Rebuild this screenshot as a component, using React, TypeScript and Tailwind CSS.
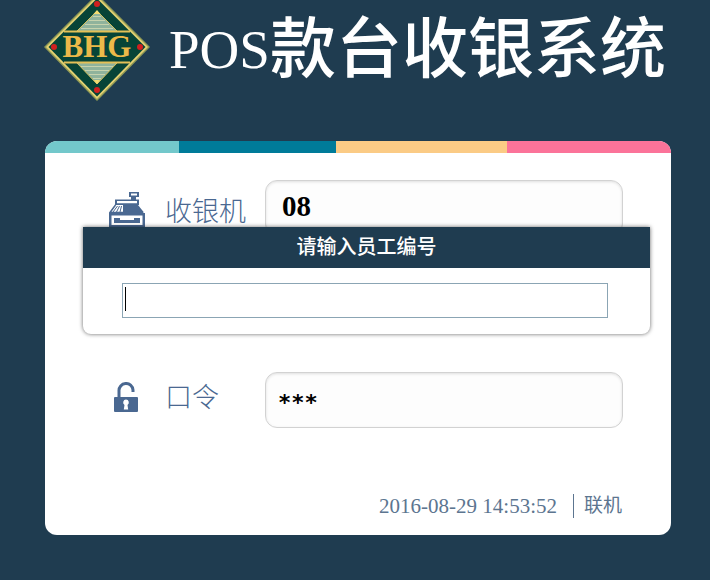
import React from "react";

function Logo() {
  return (
    <svg width="108" height="102" viewBox="0 0 108 102" role="img" aria-label="BHG" className="shrink-0">
      <path d="M54 -6 L107 47 L54 101 L1 47 Z" fill="#8f9a55" />
      <path d="M54 -4 L105 47 L54 99 L3 47 Z" fill="#e6d272" />
      <path d="M54 -1.500 L102.500 47 L54 96.500 L5.500 47 Z" fill="#064437" />
      <path d="M54 11 L74 31 H34 Z" fill="#8fb39c" />
      <path d="M54 84 L74 63 H34 Z" fill="#8fb39c" />
      <path d="M50 16.500h8M46 20.500h16M42 24.500h24M38 28.500h32M38 66.500h32M42 70.500h24M46 74.500h16M50 78.500h8" stroke="#c6d3ae" strokeWidth="1" />
      <path d="M54 11 L74 31 M54 11 L34 31 M54 84 L74 63 M54 84 L34 63" stroke="#d9c35c" strokeWidth="1" />
      <path d="M54 10l3.500 4h-7zM54 84l3-4h-6z" fill="#f2dc72" />
      <path d="M21 31.500h66M21 62.500h66" stroke="#e3c057" strokeWidth="2.200" />
      <text x="54" y="57" textAnchor="middle" fontSize="31" fontWeight="700" fill="#ecb949" fontFamily="'Liberation Serif', serif">BHG</text>
      <g fill="#d0201f">
        <circle cx="54" cy="4" r="3" />
        <circle cx="11" cy="47" r="3" />
        <circle cx="97" cy="47" r="3" />
        <circle cx="54" cy="90" r="3" />
      </g>
    </svg>
  );
}

function RegisterIcon() {
  return (
    <svg width="36" height="38" viewBox="0 0 36 38" aria-hidden="true" className="block">
      <path fill="#4a6891" fillRule="evenodd" d="M20 0h10v5h-3v3h-5V5h-2zM22 1.500v2h6v-2z" />
      <path fill="#4a6891" fillRule="evenodd" d="M6 7.500h24V13H6zM8 9v2.200h20V9z" />
      <path fill="#4a6891" d="M14 13h15l6 7.500H14z" />
      <path d="M6.500 13L1 20.500h33" fill="none" stroke="#4a6891" strokeWidth="1.500" />
      <path d="M8.500 14l-4.500 6M10.500 14l-3 6M12.500 14l-1.500 6" stroke="#4a6891" strokeWidth="1" />
      <path fill="#4a6891" fillRule="evenodd" d="M0 21h36v17H0zM2.500 23.500V33h31v-9.500z" />
      <path fill="#4a6891" fillRule="evenodd" d="M5 26h26v5H5zM11 26v2h14v-2z" />
    </svg>
  );
}

function LockIcon() {
  return (
    <svg width="24" height="30" viewBox="0 0 24 30" aria-hidden="true" className="block">
      <path d="M5 16V9a7 7 0 0 1 14 -1v2" fill="none" stroke="#4a6891" strokeWidth="3" />
      <rect x="0" y="15" width="24" height="15" rx="1" fill="#4a6891" />
      <path d="M12 17.500a3 3 0 0 1 1.500 5.500l.7 4.500h-4.400l.7-4.500a3 3 0 0 1 1.500-5.500z" fill="#fff" />
    </svg>
  );
}

const stripes = [
  "grow-[134] bg-[#73c8cb]",
  "grow-[157] bg-[#007b99]",
  "grow-[171] bg-[#fbcb85]",
  "grow-[164] bg-[#fb7399]",
];

const field =
  "h-14 min-w-0 flex-1 rounded-xl border border-[#d2d2d2] bg-[#fdfdfd] font-bold text-black shadow-[inset_0_1px_3px_rgba(0,0,0,0.12)] outline-none";
const label = "w-[100px] text-[27px] leading-8 font-light";

export default function App() {
  return (
    <div className="min-h-screen bg-[#1f3c50] pb-11 font-['Liberation_Serif','Noto_Sans_CJK_SC',serif] text-[#4a6891]">
      <header className="flex h-[141px] items-start gap-[18px] pl-[43px]">
        <Logo />
        <h1 className="flex items-center pt-3.5 leading-[72px] whitespace-nowrap text-white">
          <span className="text-[55px]">POS</span>
          <span className="text-[66px] font-medium">款台收银系统</span>
        </h1>
      </header>

      <main className="relative mr-[39px] ml-[45px] overflow-hidden rounded-xl bg-white">
        <div className="flex h-3">
          {stripes.map((s) => (
            <div key={s} className={s} />
          ))}
        </div>

        <form className="flex flex-col gap-10 pt-[27px] pr-12 pl-16" onSubmit={(e) => e.preventDefault()}>
          <div className="flex">
            <div className="w-14 pt-3">
              <RegisterIcon />
            </div>
            <label htmlFor="register" className={`${label} pt-4`}>收银机</label>
            <input id="register" defaultValue="08" className={`${field} px-4 pb-1 text-[29px]`} />
          </div>
          <div className="flex pl-[156px]">
            <input aria-label="员工" className={`${field} px-4 text-[29px]`} />
          </div>
          <div className="flex">
            <div className="w-14 pt-2.5 pl-[5px]">
              <LockIcon />
            </div>
            <label htmlFor="password" className={`${label} pt-2.5`}>口令</label>
            <input
              id="password"
              defaultValue="***"
              className={`${field} px-3 pt-1 font-['DejaVu_Sans_Mono',monospace] text-[22px]`}
            />
          </div>
        </form>

        <footer className="flex items-center justify-end gap-4 pt-16 pr-[49px] pb-[15px] leading-7 text-[#5c7590]">
          <time className="text-[21px]">2016-08-29 14:53:52</time>
          <span className="border-l border-[#5c7590] pl-2.5 text-[19px] leading-6">联机</span>
        </footer>

        <section
          role="dialog"
          aria-labelledby="dialog-title"
          className="absolute top-[86px] right-[21px] left-[38px] rounded-b-lg bg-white shadow-[0_0_4px_rgba(0,0,0,0.6)]"
        >
          <h2
            id="dialog-title"
            className="bg-[#1f3c50] text-center text-[20px] leading-[41px] font-medium text-white"
          >
            请输入员工编号
          </h2>
          <div className="pt-[15px] pr-[42px] pb-4 pl-[39px]">
            <div className="relative">
              <input
                aria-labelledby="dialog-title"
                className="block h-[35px] w-full border border-[#8ba5b4] bg-white px-1 text-[20px] text-black caret-transparent outline-none"
              />
              <span className="absolute top-1 left-[3px] h-6 w-px bg-black" />
            </div>
          </div>
        </section>
      </main>
    </div>
  );
}
